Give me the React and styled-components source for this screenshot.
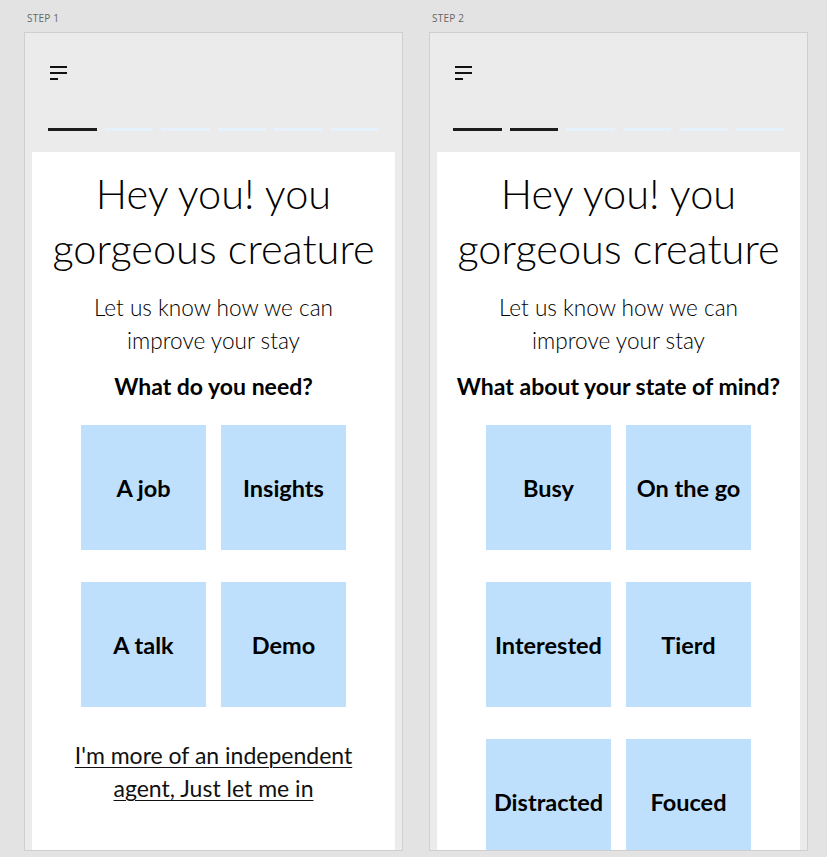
import React from 'react';
import styled, { createGlobalStyle } from 'styled-components';

const GlobalStyle = createGlobalStyle`
  html, body {
    margin: 0;
    padding: 0;
    background: #e3e3e3;
  }
  body {
    font-family: Lato, "Open Sans", sans-serif;
  }
`;

const Page = styled.main`
  display: flex;
  gap: 26px;
  padding: 11px 0 0 24px;
  height: 857px;
  box-sizing: border-box;
  overflow: hidden;
`;

const Column = styled.section`
  display: flex;
  flex-direction: column;
  width: 379px;
`;

const StepLabel = styled.div`
  font-family: "Open Sans", sans-serif;
  font-size: 10px;
  color: #666;
  letter-spacing: 0.2px;
  height: 21px;
  padding-left: 3px;
`;

const Frame = styled.div`
  height: 819px;
  box-sizing: border-box;
  border: 1px solid #cfcfcf;
  background: #ebebeb;
  padding: 0 7px;
  display: flex;
  flex-direction: column;
  overflow: hidden;
`;

const Header = styled.header`
  flex-shrink: 0;
  height: 119px;
  box-sizing: border-box;
  padding: 33px 0 0 18px;
  display: flex;
  flex-direction: column;
`;

const MenuIcon = styled.svg`
  width: 17px;
  height: 15px;
  display: block;
`;

const Progress = styled.div`
  margin-top: 47px;
  display: flex;
  gap: 8px;
  margin-left: -2px;
  width: 331px;
`;

const Bar = styled.span`
  flex: 1;
  height: 3px;
  background: ${(p) => (p.$active ? '#1c1c1c' : '#e6f1fb')};
`;

const Card = styled.div`
  flex: 1 0 auto;
  background: #fff;
  display: flex;
  flex-direction: column;
  align-items: center;
  text-align: center;
  padding-top: 14px;
`;

const Title = styled.h1`
  margin: 0;
  font-weight: 300;
  font-size: 41.5px;
  line-height: 55px;
  color: #000;
`;

const Subtitle = styled.p`
  margin: 15px 0 0;
  font-weight: 300;
  font-size: 22.6px;
  line-height: 33px;
  color: #000;
`;

const Question = styled.h2`
  margin: 14px 0 0;
  font-weight: 700;
  font-size: 23px;
  line-height: 30px;
  color: #000;
`;

const Grid = styled.div`
  margin-top: 24px;
  display: grid;
  grid-template-columns: repeat(2, 125px);
  column-gap: 15px;
  row-gap: 32px;
`;

const Tile = styled.button`
  width: 125px;
  height: 125px;
  border: none;
  background: #bee0fd;
  font-family: inherit;
  font-weight: 700;
  font-size: 23.5px;
  color: #000;
  padding: 0;
  display: flex;
  align-items: center;
  justify-content: center;
`;

const SkipLink = styled.a`
  margin-top: 32px;
  font-size: 23px;
  line-height: 33px;
  color: #111;
  text-decoration: underline;
  text-underline-offset: 3px;
  text-decoration-thickness: 1px;
  width: 300px;
`;

const Menu = () => (
  <MenuIcon viewBox="0 0 17 15">
    <rect x="0" y="0" width="17" height="2" fill="#111" />
    <rect x="0" y="6" width="17" height="2" fill="#111" />
    <rect x="0" y="12" width="8" height="2" fill="#111" />
  </MenuIcon>
);

const steps = [
  {
    label: 'STEP 1',
    done: 1,
    question: 'What do you need?',
    options: ['A job', 'Insights', 'A talk', 'Demo'],
    skip: true,
  },
  {
    label: 'STEP 2',
    done: 2,
    question: 'What about your state of mind?',
    options: ['Busy', 'On the go', 'Interested', 'Tierd', 'Distracted', 'Fouced'],
    skip: false,
  },
];

const StepScreen = ({ step }) => (
  <Column>
    <StepLabel>{step.label}</StepLabel>
    <Frame>
      <Header>
        <Menu />
        <Progress>
          {[0, 1, 2, 3, 4, 5].map((i) => (
            <Bar key={i} $active={i < step.done} />
          ))}
        </Progress>
      </Header>
      <Card>
        <Title>
          Hey you! you
          <br />
          gorgeous creature
        </Title>
        <Subtitle>
          Let us know how we can
          <br />
          improve your stay
        </Subtitle>
        <Question>{step.question}</Question>
        <Grid>
          {step.options.map((o) => (
            <Tile key={o} type="button">
              {o}
            </Tile>
          ))}
        </Grid>
        {step.skip && (
          <SkipLink href="#">I'm more of an independent agent, Just let me in</SkipLink>
        )}
      </Card>
    </Frame>
  </Column>
);

const App = () => (
  <>
    <GlobalStyle />
    <Page>
      {steps.map((s) => (
        <StepScreen key={s.label} step={s} />
      ))}
    </Page>
  </>
);

export default App;
